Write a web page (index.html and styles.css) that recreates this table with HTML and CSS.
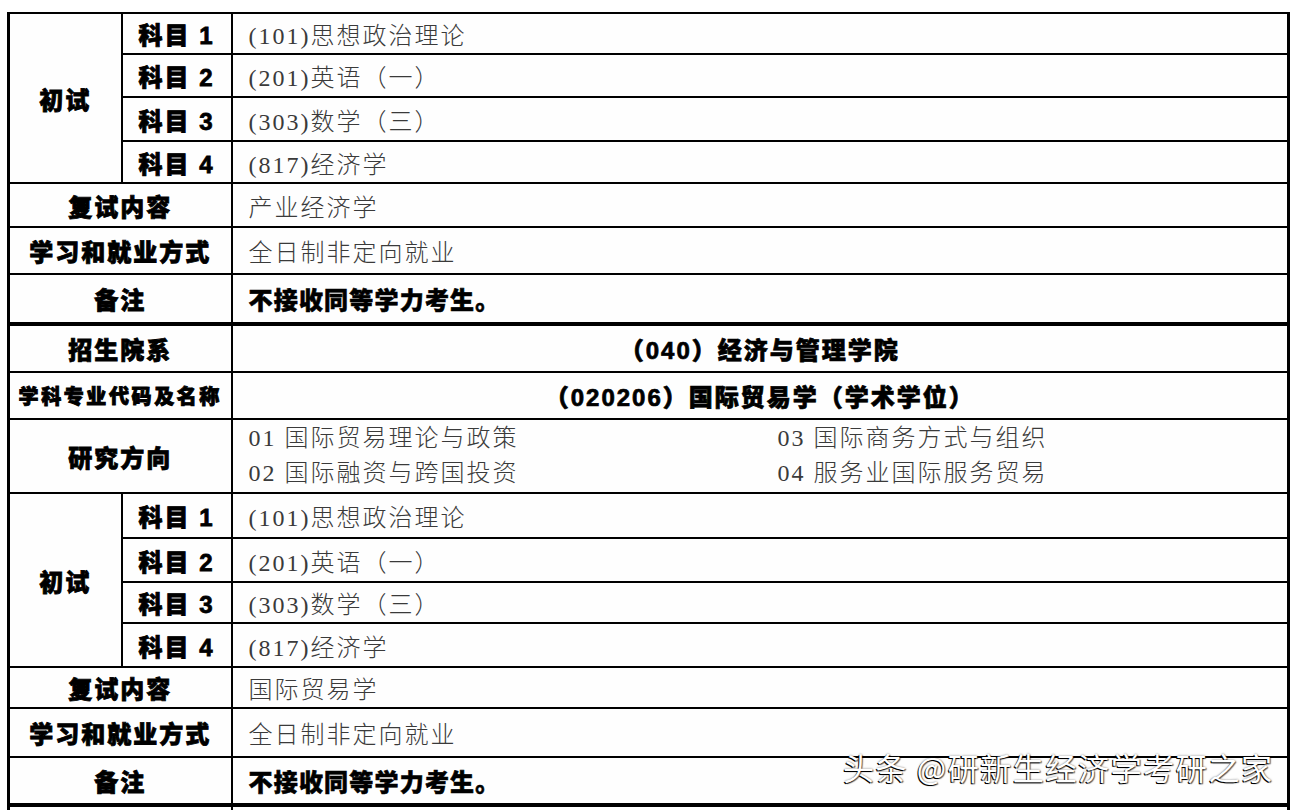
FILE: index.html
```html
<!DOCTYPE html>
<html lang="zh-CN">
<head>
<meta charset="utf-8">
<title>招生专业目录</title>
<link rel="stylesheet" href="styles.css">
</head>
<body>
<div class="page">
  <table class="admit">
    <colgroup><col class="c1"><col class="c2"><col class="c3"></colgroup>
    <tbody>
      <tr class="r41"><td class="lbl" rowspan="4">初试</td><td class="lbl">科目 1</td><td class="val">(101)思想政治理论</td></tr>
      <tr class="r43"><td class="lbl">科目 2</td><td class="val">(201)英语（一）</td></tr>
      <tr class="r44"><td class="lbl">科目 3</td><td class="val">(303)数学（三）</td></tr>
      <tr class="r42"><td class="lbl">科目 4</td><td class="val">(817)经济学</td></tr>
      <tr class="r44"><td class="lbl" colspan="2">复试内容</td><td class="val">产业经济学</td></tr>
      <tr class="r47"><td class="lbl" colspan="2">学习和就业方式</td><td class="val">全日制非定向就业</td></tr>
      <tr class="r50 sep"><td class="lbl" colspan="2">备注</td><td class="val val-bold">不接收同等学力考生。</td></tr>
      <tr class="r48"><td class="lbl" colspan="2">招生院系</td><td class="val val-head">（040）经济与管理学院</td></tr>
      <tr class="r47"><td class="lbl lbl-sm" colspan="2">学科专业代码及名称</td><td class="val val-head">（020206）国际贸易学（学术学位）</td></tr>
      <tr class="r74"><td class="lbl" colspan="2">研究方向</td><td class="val">
        <div class="dirs">
          <span>01 国际贸易理论与政策</span><span>03 国际商务方式与组织</span>
          <span>02 国际融资与跨国投资</span><span>04 服务业国际服务贸易</span>
        </div>
      </td></tr>
      <tr class="r45"><td class="lbl" rowspan="4">初试</td><td class="lbl">科目 1</td><td class="val">(101)思想政治理论</td></tr>
      <tr class="r44"><td class="lbl">科目 2</td><td class="val">(201)英语（一）</td></tr>
      <tr class="r41"><td class="lbl">科目 3</td><td class="val">(303)数学（三）</td></tr>
      <tr class="r44"><td class="lbl">科目 4</td><td class="val">(817)经济学</td></tr>
      <tr class="r41"><td class="lbl" colspan="2">复试内容</td><td class="val">国际贸易学</td></tr>
      <tr class="r49"><td class="lbl" colspan="2">学习和就业方式</td><td class="val">全日制非定向就业</td></tr>
      <tr class="r48 sep"><td class="lbl" colspan="2">备注</td><td class="val val-bold">不接收同等学力考生。</td></tr>
      <tr class="r40"><td class="lbl" colspan="2"></td><td class="val"></td></tr>
    </tbody>
  </table>
  <div class="watermark">头条 @研新生经济学考研之家</div>
</div>
</body>
</html>
```

FILE: styles.css
```css
* { box-sizing: border-box; }
html, body { margin: 0; padding: 0; background: #fff; }
body { font-family: "Noto Sans CJK SC", sans-serif; }

.page {
  position: relative;
  width: 1294px;
  height: 810px;
  overflow: hidden;
  padding: 12px 0 0 7px;
}

.admit {
  border-collapse: collapse;
  table-layout: fixed;
  width: 1283px;
  border: 3px solid #000;
  border-top-width: 2px;
}
.admit td {
  border: 2px solid #000;
  padding: 0;
  vertical-align: middle;
  background: #fefefe;
  white-space: nowrap;
}
.c1 { width: 113px; }
.c2 { width: 110px; }

.r40 { height: 40px; }
.r41 { height: 41px; }
.r42 { height: 42px; }
.r43 { height: 43px; }
.r44 { height: 44px; }
.r45 { height: 45px; }
.r47 { height: 47px; }
.r48 { height: 48px; }
.r49 { height: 49px; }
.r50 { height: 50px; }
.r74 { height: 74px; }

.admit .sep td { border-bottom-width: 4px; }

.admit .lbl {
  text-align: center;
  font-family: "Liberation Sans", "Noto Sans CJK SC", sans-serif;
  font-weight: 900;
  font-size: 24px;
  letter-spacing: 2px;
  color: #000;
  -webkit-text-stroke: 0.8px #000;
}
.admit .lbl-sm {
  font-size: 20px;
  letter-spacing: 2.6px;
  -webkit-text-stroke: 0.9px #000;
}

.admit .val {
  padding-left: 16px;
  font-family: "Liberation Serif", "Noto Sans CJK SC", serif;
  font-weight: 300;
  font-size: 24px;
  letter-spacing: 2px;
  color: #3a3a3a;
}
.admit .val-bold {
  font-family: "Liberation Sans", "Noto Sans CJK SC", sans-serif;
  font-weight: 900;
  letter-spacing: 1.2px;
  color: #000;
  -webkit-text-stroke: 0.6px #000;
}
.admit .val-head {
  padding-left: 0;
  text-align: center;
  font-family: "Liberation Sans", "Noto Sans CJK SC", sans-serif;
  font-weight: 900;
  font-size: 24px;
  letter-spacing: 2px;
  color: #000;
  -webkit-text-stroke: 0.7px #000;
}

.dirs {
  display: grid;
  grid-template-columns: 529px 1fr;
  line-height: 35px;
}

.watermark {
  position: absolute;
  left: 843px;
  top: 751px;
  font-family: "Noto Sans CJK SC", sans-serif;
  font-size: 31px;
  line-height: 1;
  letter-spacing: 1.6px;
  color: #fff;
  text-shadow: -1px 1px 0 #000, 1px 1px 1px rgba(0, 0, 0, 0.6), 0 0 2px rgba(0, 0, 0, 0.5);
  white-space: nowrap;
}
```
